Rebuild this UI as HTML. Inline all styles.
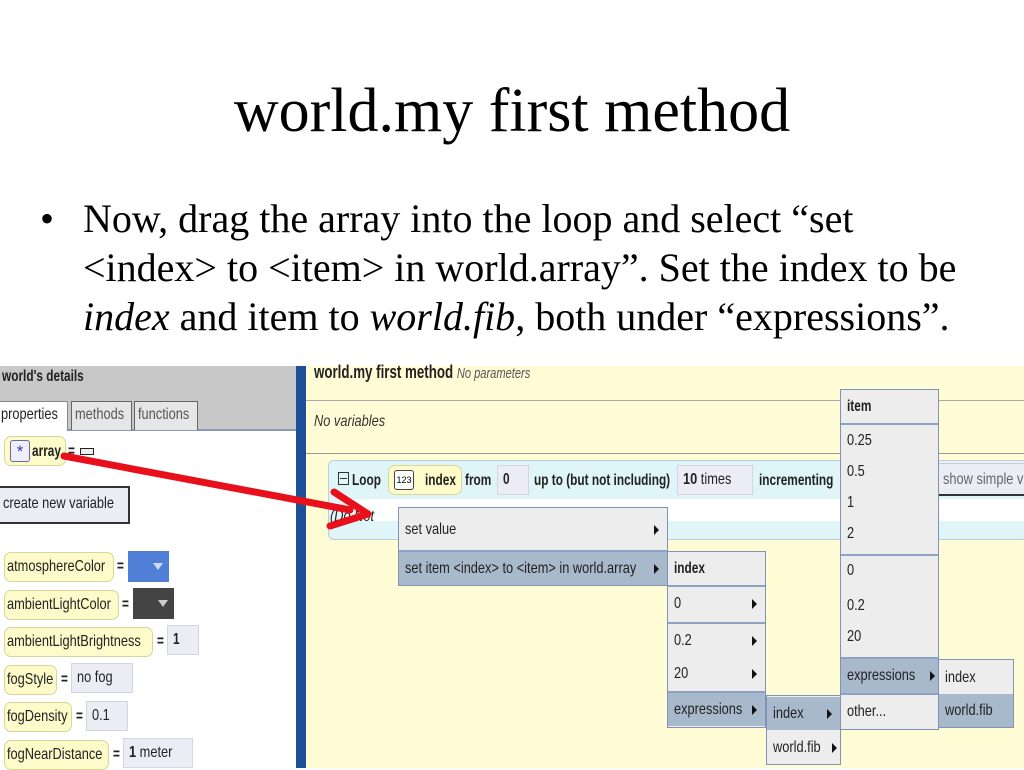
<!DOCTYPE html>
<html><head><meta charset="utf-8"><style>
*{margin:0;padding:0;box-sizing:border-box}
body{width:1024px;height:768px;background:#fff;position:relative;overflow:hidden;font-family:"Liberation Sans",sans-serif}
.a{position:absolute}
.t{font-family:"Liberation Serif",serif;color:#000}
.n{font-family:"Liberation Sans",sans-serif;font-size:16px;transform:scaleX(.8);transform-origin:left center;white-space:nowrap;color:#222}
.b{font-weight:bold;transform:scaleX(.74)}
.m{position:absolute;background:#ededed;border:1px solid #7f92b8}
.r{position:absolute;left:0;right:0;padding-left:6px;display:flex;align-items:center}
.h{background:#a9b9cc}
.sep{border-top:2px solid #8fa2c4}
.tri{position:absolute;right:8px;width:0;height:0;border-left:5px solid #111;border-top:5px solid transparent;border-bottom:5px solid transparent}
.pill{position:absolute;background:#fdfbc9;border:1px solid #d8d59a;border-radius:7px;height:26px;padding-left:5px;display:flex;align-items:center}
.dd{position:absolute;background:#ececf5;border:1px solid #d5d5e0;height:30px;display:flex;align-items:center;padding-left:5px}
</style></head><body>
<div class="a t" style="left:0;width:1024px;top:76px;text-align:center;font-size:62px">world.my first method</div>
<div class="a t" style="left:40px;top:194px;font-size:40px;line-height:49px">•</div>
<div class="a t" style="left:83px;top:194px;font-size:40px;line-height:49px;width:960px;white-space:nowrap">Now, drag the array into the loop and select “set<br>&lt;index&gt; to &lt;item&gt; in world.array”. Set the index to be<br><i>index</i> and item to <i>world.fib</i>, both under “expressions”.</div>

<!-- left panel -->
<div class="a" style="left:0;top:366px;width:296px;height:402px;background:#fff"></div>
<div class="a" style="left:0;top:366px;width:296px;height:64px;background:#c8c8c8"></div>
<div class="a n b" style="left:2px;top:367px;line-height:20px">world's details</div>
<div class="a" style="left:0;top:429px;width:296px;height:2px;background:#8898b8"></div>
<div class="a" style="left:0;top:401px;width:68px;height:30px;background:#fff;border-right:1px solid #888;border-top:1px solid #888"></div>
<div class="a n" style="left:1px;top:405px;line-height:20px">properties</div>
<div class="a" style="left:71px;top:401px;width:61px;height:29px;background:#e6e6e6;border:1px solid #666;border-bottom:none"></div>
<div class="a n" style="left:75px;top:405px;color:#555;line-height:20px">methods</div>
<div class="a" style="left:134px;top:401px;width:64px;height:29px;background:#e6e6e6;border:1px solid #666;border-bottom:none"></div>
<div class="a n" style="left:138px;top:405px;color:#555;line-height:20px">functions</div>

<div class="pill" style="left:4px;top:436px;width:62px;height:30px"><div style="width:20px;height:22px;border:1px solid #6a6a90;border-radius:3px;background:#eef;color:#3a3aa0;font-size:17px;text-align:center;line-height:22px">*</div></div>
<div class="a n b" style="left:32px;top:443px">array</div>
<div class="a n b" style="left:68px;top:443px">=</div>
<div class="a" style="left:80px;top:448px;width:14px;height:7px;border:1.5px solid #222;background:#eee"></div>
<div class="a" style="left:0;top:486px;width:130px;height:38px;background:#ececf5;border:2px solid #333;border-left:none"></div>
<div class="a n" style="left:3px;top:495px">create new variable</div>

<div class="pill" style="left:4px;top:552px;width:110px;height:30px"></div><div class="a n" style="left:7px;top:558px">atmosphereColor</div><div class="a n b" style="left:117px;top:558px">=</div><div class="a" style="left:128px;top:551px;width:41px;height:31px;background:#4f7fd6"></div><div class="a" style="left:153px;top:563px;border-top:7px solid #cde;border-left:5px solid transparent;border-right:5px solid transparent"></div>
<div class="pill" style="left:4px;top:590px;width:115px;height:30px"></div><div class="a n" style="left:7px;top:596px">ambientLightColor</div><div class="a n b" style="left:122px;top:596px">=</div><div class="a" style="left:133px;top:588px;width:41px;height:31px;background:#444"></div><div class="a" style="left:158px;top:600px;border-top:7px solid #ccc;border-left:5px solid transparent;border-right:5px solid transparent"></div>
<div class="pill" style="left:4px;top:627px;width:149px;height:30px"></div><div class="a n" style="left:7px;top:633px">ambientLightBrightness</div><div class="a n b" style="left:157px;top:633px">=</div><div class="dd" style="left:167px;top:625px;width:32px"><span class="n b">1</span></div>
<div class="pill" style="left:4px;top:665px;width:53px;height:30px"></div><div class="a n" style="left:7px;top:671px">fogStyle</div><div class="a n b" style="left:61px;top:671px">=</div><div class="dd" style="left:71px;top:663px;width:62px"><span class="n">no fog</span></div>
<div class="pill" style="left:4px;top:702px;width:68px;height:30px"></div><div class="a n" style="left:7px;top:708px">fogDensity</div><div class="a n b" style="left:76px;top:708px">=</div><div class="dd" style="left:86px;top:701px;width:42px"><span class="n">0.1</span></div>
<div class="pill" style="left:4px;top:740px;width:105px;height:30px"></div><div class="a n" style="left:7px;top:746px">fogNearDistance</div><div class="a n b" style="left:113px;top:746px">=</div><div class="dd" style="left:123px;top:738px;width:70px"><span class="n"><b>1</b> meter</span></div>

<!-- divider -->
<div class="a" style="left:296px;top:366px;width:10px;height:402px;background:#1d4f96"></div>
<!-- right panel -->
<div class="a" style="left:306px;top:366px;width:718px;height:402px;background:#fffcd6"></div>
<div class="a n b" style="left:314px;top:361px;font-size:18px;line-height:22px">world.my first method <i style="font-weight:normal;font-size:15px;color:#555">No parameters</i></div>
<div class="a" style="left:306px;top:400px;width:718px;height:1px;background:#aaa"></div>
<div class="a n" style="left:314px;top:413px;font-style:italic;color:#333">No variables</div>
<div class="a" style="left:306px;top:453px;width:718px;height:1px;background:#999"></div>
<div class="a" style="left:328px;top:460px;width:700px;height:80px;background:#dff5f8;border:1px solid #bcd;border-radius:6px"></div>
<div class="a" style="left:350px;top:499px;width:680px;height:22px;background:#fff"></div>
<div class="a" style="left:338px;top:472px;width:11px;height:13px;border:1px solid #333"></div>
<div class="a" style="left:340px;top:478px;width:7px;height:1px;background:#333"></div>
<div class="a n b" style="left:352px;top:472px">Loop</div>
<div class="pill" style="left:388px;top:465px;width:74px;height:30px"><div style="width:20px;height:20px;border:1px solid #444;border-radius:3px;font-size:9px;line-height:18px;text-align:center;background:#fff">123</div></div>
<div class="a n b" style="left:425px;top:472px">index</div>
<div class="a n b" style="left:465px;top:472px">from</div>
<div class="dd" style="left:497px;top:465px;width:32px"><span class="n b">0</span></div>
<div class="a n b" style="left:534px;top:472px">up to (but not including)</div>
<div class="dd" style="left:677px;top:465px;width:76px"><span class="n"><b>10</b> times</span></div>
<div class="a n b" style="left:759px;top:472px">incrementing</div>
<div class="a" style="left:938px;top:463px;width:90px;height:33px;background:#ececf5;border:2px solid #333;border-top:1px solid #ccc;border-left:1px solid #ccc"></div>
<div class="a n" style="left:943px;top:471px;color:#666">show simple v</div>
<div class="a n" style="left:330px;top:508px;font-style:italic">(Do Not</div>

<!-- menus -->
<div class="m" style="left:398px;top:507px;width:270px;height:79px">
 <div class="r" style="top:2px;height:39px"><span class="n">set value</span><div class="tri"></div></div>
 <div class="r h sep" style="top:42px;height:35px"><span class="n">set item &lt;index&gt; to &lt;item&gt; in world.array</span><div class="tri"></div></div>
</div>
<div class="m" style="left:667px;top:551px;width:99px;height:177px">
 <div class="r" style="top:1px;height:32px"><span class="n b">index</span></div>
 <div class="r sep" style="top:33px;height:36px"><span class="n">0</span><div class="tri"></div></div>
 <div class="r sep" style="top:70px;height:35px"><span class="n">0.2</span><div class="tri"></div></div>
 <div class="r" style="top:105px;height:33px"><span class="n">20</span><div class="tri"></div></div>
 <div class="r h sep" style="top:139px;height:35px"><span class="n">expressions</span><div class="tri"></div></div>
</div>
<div class="m" style="left:766px;top:695px;width:75px;height:70px">
 <div class="r h" style="top:1px;height:33px"><span class="n">index</span><div class="tri"></div></div>
 <div class="r" style="top:35px;height:33px"><span class="n">world.fib</span><div class="tri" style="right:3px"></div></div>
</div>
<div class="m" style="left:840px;top:389px;width:99px;height:341px">
 <div class="r" style="top:1px;height:32px"><span class="n b">item</span></div>
 <div class="r sep" style="top:33px;height:33px"><span class="n">0.25</span></div>
 <div class="r" style="top:66px;height:31px"><span class="n">0.5</span></div>
 <div class="r" style="top:97px;height:31px"><span class="n">1</span></div>
 <div class="r" style="top:128px;height:31px"><span class="n">2</span></div>
 <div class="r sep" style="top:164px;height:32px"><span class="n">0</span></div>
 <div class="r" style="top:200px;height:31px"><span class="n">0.2</span></div>
 <div class="r" style="top:231px;height:31px"><span class="n">20</span></div>
 <div class="r h sep" style="top:267px;height:36px"><span class="n">expressions</span><div class="tri" style="right:3px"></div></div>
 <div class="r sep" style="top:303px;height:36px"><span class="n">other...</span></div>
</div>
<div class="m" style="left:938px;top:659px;width:76px;height:69px">
 <div class="r" style="top:1px;height:33px"><span class="n">index</span></div>
 <div class="r h" style="top:34px;height:33px"><span class="n">world.fib</span></div>
</div>

<!-- arrow -->
<svg class="a" style="left:0;top:0" width="1024" height="768"><line x1="64" y1="456" x2="350" y2="510" stroke="#e8101a" stroke-width="7" stroke-linecap="round"/><path d="M334 492 L368 514 L330 526" fill="none" stroke="#e8101a" stroke-width="7" stroke-linecap="round" stroke-linejoin="round"/></svg>
</body></html>
